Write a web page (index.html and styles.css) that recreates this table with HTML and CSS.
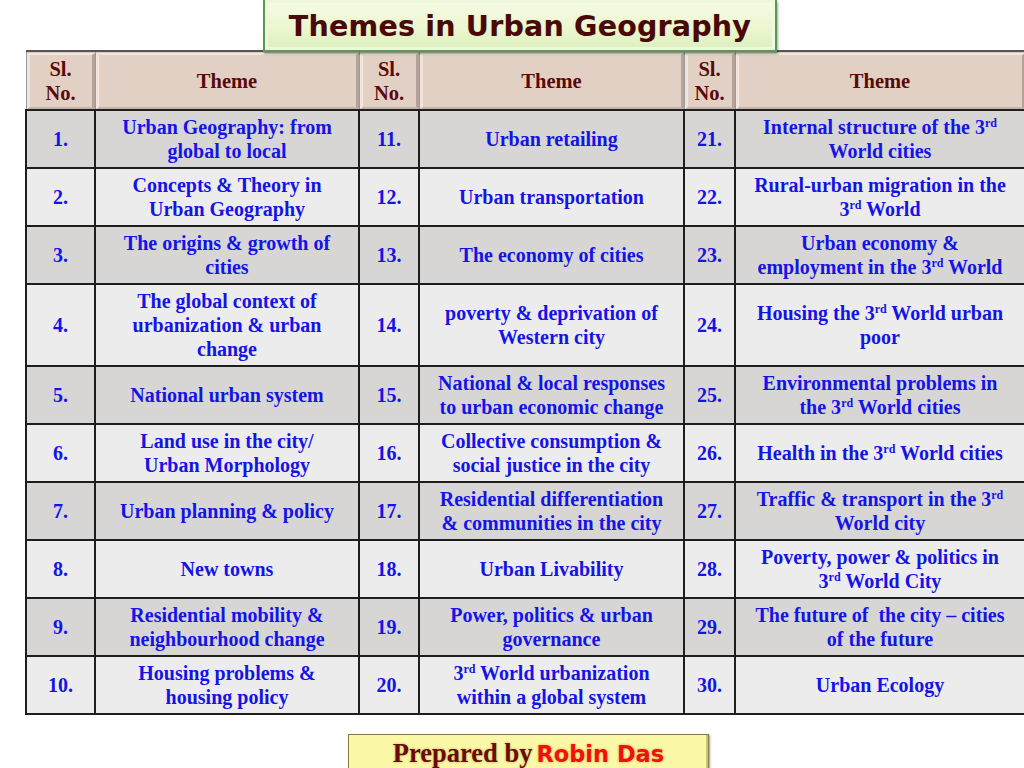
FILE: index.html
```html
<!DOCTYPE html>
<html>
<head>
<meta charset="utf-8">
<link rel="stylesheet" href="styles.css">
</head>
<body>
<div class="page">
  <div class="title-wrap"><div class="title">Themes in Urban Geography</div></div>
  <table class="themes">
    <colgroup>
      <col class="c-sl1"><col class="c-th1"><col class="c-sl2"><col class="c-th2"><col class="c-sl3"><col class="c-th3">
    </colgroup>
    <thead>
      <tr>
        <th><div class="bevel">Sl.<br>No.</div></th>
        <th><div class="bevel">Theme</div></th>
        <th><div class="bevel">Sl.<br>No.</div></th>
        <th><div class="bevel">Theme</div></th>
        <th><div class="bevel">Sl.<br>No.</div></th>
        <th><div class="bevel">Theme</div></th>
      </tr>
    </thead>
    <tbody>
      <tr class="odd">
        <td>1.</td><td>Urban Geography: from<br>global to local</td>
        <td>11.</td><td>Urban retailing</td>
        <td>21.</td><td>Internal structure of the 3<sup>rd</sup><br>World cities</td>
      </tr>
      <tr class="even">
        <td>2.</td><td>Concepts &amp; Theory in<br>Urban Geography</td>
        <td>12.</td><td>Urban transportation</td>
        <td>22.</td><td>Rural-urban migration in the<br>3<sup>rd</sup> World</td>
      </tr>
      <tr class="odd">
        <td>3.</td><td>The origins &amp; growth of<br>cities</td>
        <td>13.</td><td>The economy of cities</td>
        <td>23.</td><td>Urban economy &amp;<br>employment in the 3<sup>rd</sup> World</td>
      </tr>
      <tr class="even tall">
        <td>4.</td><td>The global context of<br>urbanization &amp; urban<br>change</td>
        <td>14.</td><td>poverty &amp; deprivation of<br>Western city</td>
        <td>24.</td><td>Housing the 3<sup>rd</sup> World urban<br>poor</td>
      </tr>
      <tr class="odd">
        <td>5.</td><td>National urban system</td>
        <td>15.</td><td>National &amp; local responses<br>to urban economic change</td>
        <td>25.</td><td>Environmental problems in<br>the 3<sup>rd</sup> World cities</td>
      </tr>
      <tr class="even">
        <td>6.</td><td>Land use in the city/<br>Urban Morphology</td>
        <td>16.</td><td>Collective consumption &amp;<br>social justice in the city</td>
        <td>26.</td><td>Health in the 3<sup>rd</sup> World cities</td>
      </tr>
      <tr class="odd">
        <td>7.</td><td>Urban planning &amp; policy</td>
        <td>17.</td><td>Residential differentiation<br>&amp; communities in the city</td>
        <td>27.</td><td>Traffic &amp; transport in the 3<sup>rd</sup><br>World city</td>
      </tr>
      <tr class="even">
        <td>8.</td><td>New towns</td>
        <td>18.</td><td>Urban Livability</td>
        <td>28.</td><td>Poverty, power &amp; politics in<br>3<sup>rd</sup> World City</td>
      </tr>
      <tr class="odd">
        <td>9.</td><td>Residential mobility &amp;<br>neighbourhood change</td>
        <td>19.</td><td>Power, politics &amp; urban<br>governance</td>
        <td>29.</td><td>The future of&nbsp; the city – cities<br>of the future</td>
      </tr>
      <tr class="even">
        <td>10.</td><td>Housing problems &amp;<br>housing policy</td>
        <td>20.</td><td>3<sup>rd</sup> World urbanization<br>within a global system</td>
        <td>30.</td><td>Urban Ecology</td>
      </tr>
    </tbody>
  </table>
  <div class="footer-wrap">
    <div class="footer"><span class="prep">Prepared by</span> <span class="name">Robin Das</span></div>
  </div>
</div>
</body>
</html>
```
FILE: styles.css
```css
html, body {
  margin: 0;
  padding: 0;
  background: #ffffff;
  overflow: hidden;
}
.page {
  width: 1024px;
  height: 768px;
  position: relative;
  overflow: hidden;
}
.title-wrap {
  position: absolute;
  left: 263px;
  top: 0;
  z-index: 2;
}
.title {
  width: 514px;
  height: 52px;
  box-sizing: border-box;
  border: 2px solid #5a9a55;
  border-top: none;
  background: linear-gradient(to bottom, #f6fbe4 0%, #ebf6cf 60%, #dcefbc 100%);
  box-shadow: inset 0 0 0 3px #eef8dc, 1px 2px 2px rgba(0,0,0,0.35);
  font-family: "DejaVu Sans", sans-serif;
  font-weight: bold;
  font-size: 28.5px;
  color: #4a0808;
  text-align: center;
  line-height: 54px;
  letter-spacing: 0.2px;
  text-shadow: 0 0 1px #c8d6a8;
}
.themes {
  position: absolute;
  left: 25px;
  top: 50px;
  width: 999px;
  border-collapse: collapse;
  table-layout: fixed;
  font-family: "Liberation Serif", serif;
  font-weight: bold;
}
.c-sl1 { width: 69px; }
.c-th1 { width: 264px; }
.c-sl2 { width: 60px; }
.c-th2 { width: 265px; }
.c-sl3 { width: 51px; }
.c-th3 { width: 290px; }
.themes th {
  padding: 0;
  height: 57px;
  border: 1px solid #9a9a9a;
  border-top: 2px solid #555;
  background: #dcc8bc;
  vertical-align: middle;
}
.bevel {
  height: 56px;
  box-sizing: border-box;
  display: flex;
  align-items: center;
  justify-content: center;
  text-align: center;
  background: #e3d0c4;
  border-top: 2px solid #f1e6de;
  border-left: 3px solid #f0e4dc;
  border-right: 3px solid #b4a39a;
  border-bottom: 2px solid #c6b3a8;
  color: #5a0808;
  font-size: 20.5px;
  line-height: 24px;
}
.themes td {
  border: 2px solid #1e1e1e;
  padding: 0;
  height: 56px;
  text-align: center;
  vertical-align: middle;
  color: #1414e6;
  font-size: 20px;
  line-height: 24px;
}
.themes tr.tall td { height: 80px; }
.themes tr.odd td { background: #d8d6d4; }
.themes tr.even td { background: #ececec; }
.themes sup {
  font-size: 12px;
  line-height: 0;
  vertical-align: 7px;
}
.footer-wrap {
  position: absolute;
  left: 348px;
  top: 734px;
}
.footer {
  width: 361px;
  height: 34px;
  box-sizing: border-box;
  background: #fbf8a8;
  border: 1px solid #8a7a4a;
  border-bottom: none;
  box-shadow: inset -2px 0 0 #c9c37a, 1px 1px 2px rgba(0,0,0,0.4);
  text-align: center;
  padding-top: 3px;
  line-height: 30px;
  white-space: nowrap;
}
.prep {
  font-family: "Liberation Serif", serif;
  font-weight: bold;
  font-size: 26.5px;
  color: #6a0a0a;
  text-shadow: 0 0 2px #d6d27a, 0 0 3px #c8c46a;
}
.name {
  font-family: "DejaVu Sans", sans-serif;
  font-weight: bold;
  font-size: 22.5px;
  color: #f01010;
  text-shadow: 0 0 2px #e8c860, 0 0 3px #e0c050;
}
```
